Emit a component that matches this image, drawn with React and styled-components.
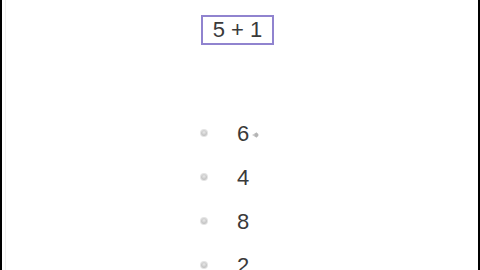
import React from "react";
import styled, { createGlobalStyle } from "styled-components";

const Global = createGlobalStyle`
  html, body { margin: 0; padding: 0; background: #ffffff; }
  body { font-family: "Liberation Sans", Arial, sans-serif; }
`;

const Frame = styled.div`
  width: 480px;
  height: 270px;
  box-sizing: border-box;
  border-left: 2px solid #000;
  border-right: 2px solid #000;
  overflow: hidden;
  background: #fff;
`;

const Inner = styled.div`
  height: 100%;
  box-sizing: border-box;
  margin-left: 3px;
  border-left: 1px solid #f0f0f0;
  padding: 15px 0 0 195px;
  display: flex;
  flex-direction: column;
  align-items: flex-start;
`;

const Question = styled.div`
  width: 69px;
  height: 26px;
  border: 2px solid #9083cf;
  color: #3a3a3a;
  font-size: 22px;
  line-height: 26px;
  text-align: center;
`;

const Options = styled.ul`
  list-style: none;
  margin: 77px 0 0 0;
  padding: 0;
  display: flex;
  flex-direction: column;
`;

const Row = styled.li`
  height: 44px;
  display: flex;
  align-items: flex-start;
  position: relative;
`;

const Bullet = styled.span`
  width: 6px;
  height: 6px;
  border-radius: 50%;
  margin-top: 8px;
  background: radial-gradient(circle at 50% 40%, #e8e8e8 0%, #c0c0c0 70%, #aaaaaa 100%);
  box-shadow: 0 0 0 1px #e4e4e4;
`;

const Label = styled.span`
  margin-left: 30px;
  color: #3a3a3a;
  font-size: 22px;
  line-height: 24px;
`;

const Pointer = styled.svg`
  position: absolute;
  left: 50px;
  top: 9px;
`;

export default function App() {
  const opts = ["6", "4", "8", "2"];
  return (
    <>
      <Global />
      <Frame>
        <Inner>
          <Question>5 + 1</Question>
          <Options>
            {opts.map((o, i) => (
              <Row key={o}>
                <Bullet />
                <Label>{o}</Label>
                {i === 0 && (
                  <Pointer width="9" height="8" viewBox="0 0 9 8">
                    <path d="M1 4 L6 1 L6 7 Z" fill="#cccccc" />
                    <circle cx="5.5" cy="4" r="2" fill="#b4b4b4" />
                  </Pointer>
                )}
              </Row>
            ))}
          </Options>
        </Inner>
      </Frame>
    </>
  );
}
